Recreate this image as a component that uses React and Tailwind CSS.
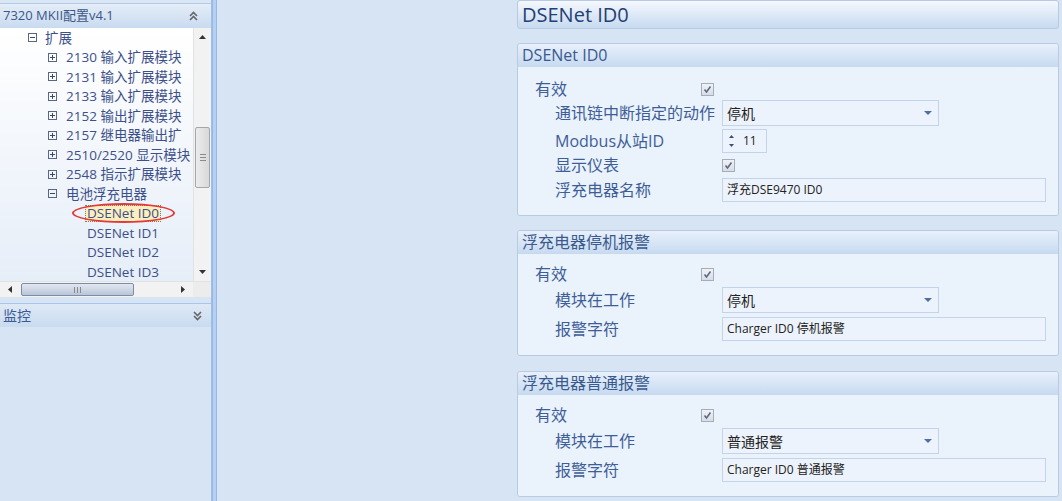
import React from "react";

const TREE = [
  { l: 0, icon: "minus", t: "扩展" },
  { l: 1, icon: "plus", t: "2130 输入扩展模块" },
  { l: 1, icon: "plus", t: "2131 输入扩展模块" },
  { l: 1, icon: "plus", t: "2133 输入扩展模块" },
  { l: 1, icon: "plus", t: "2152 输出扩展模块" },
  { l: 1, icon: "plus", t: "2157 继电器输出扩" },
  { l: 1, icon: "plus", t: "2510/2520 显示模块" },
  { l: 1, icon: "plus", t: "2548 指示扩展模块" },
  { l: 1, icon: "minus", t: "电池浮充电器" },
  { l: 2, t: "DSENet ID0", sel: true },
  { l: 2, t: "DSENet ID1" },
  { l: 2, t: "DSENet ID2" },
  { l: 2, t: "DSENet ID3" },
];

function ExpandIcon({ plus }) {
  return (
    <svg width="9" height="9" viewBox="0 0 9 9" className="shrink-0">
      <rect x="0.5" y="0.5" width="8" height="8" fill="none" stroke="#5a6684" />
      <path d="M2 4.5h5" stroke="#3c4868" />
      {plus && <path d="M4.5 2v5" stroke="#3c4868" />}
    </svg>
  );
}

function DoubleChevron({ down }) {
  return (
    <svg width="9" height="10" viewBox="0 0 9 10" className={down ? "rotate-180" : ""}>
      <path d="M1 5l3.5-3.5L8 5M1 9l3.5-3.5L8 9" fill="none" stroke="#666" strokeWidth="1.6" />
    </svg>
  );
}

function Tri({ dir, color = "#333", w = 7, h = 4 }) {
  const d =
    dir === "up"
      ? `M0 ${h}L${w / 2} 0L${w} ${h}Z`
      : dir === "down"
      ? `M0 0L${w} 0L${w / 2} ${h}Z`
      : dir === "left"
      ? `M${h} 0L0 ${w / 2}L${h} ${w}Z`
      : `M0 0L${h} ${w / 2}L0 ${w}Z`;
  const vw = dir === "up" || dir === "down" ? w : h;
  const vh = dir === "up" || dir === "down" ? h : w;
  return (
    <svg width={vw} height={vh} viewBox={`0 0 ${vw} ${vh}`}>
      <path d={d} fill={color} />
    </svg>
  );
}

function LeftPanel() {
  return (
    <div className="w-[212px] h-full flex flex-col bg-[#d6e4f3] border-r border-[#a3bedf]">
      <div className="h-[4px] bg-[#dae6f4] border-b border-[#b5cae6]" />
      <div className="h-[24px] flex items-center justify-between pl-[3px] pr-[13px] bg-gradient-to-b from-[#e4edf8] to-[#c9dbf0] text-[13px] text-[#3b5688]">
        <span>7320 MKII配置v4.1</span>
        <DoubleChevron />
      </div>
      <div className="h-[253px] flex relative bg-gradient-to-b from-white to-[#e6eef8]">
        <div className="flex-1 overflow-hidden text-[13.5px] text-[#3d508a] whitespace-nowrap">
          {TREE.map((it, i) => (
            <div
              key={i}
              className={
                "h-[19.5px] flex items-center " +
                (it.l === 0 ? "pl-[28px]" : it.l === 1 ? "pl-[48px]" : "pl-[85px]")
              }
            >
              {it.icon && <ExpandIcon plus={it.icon === "plus"} />}
              {it.icon ? (
                <span className={it.l === 0 ? "ml-[8px]" : "ml-[9px]"}>{it.t}</span>
              ) : it.sel ? (
                <span className="h-[17px] flex items-center px-[1px] border border-dotted border-[#7a7a7a] bg-[#fcefbd]">
                  {it.t}
                </span>
              ) : (
                <span className="pl-[2px]">{it.t}</span>
              )}
            </div>
          ))}
        </div>
        <div className="w-[18px] flex flex-col bg-[#f2f2f2] border-l border-[#e2e2e2]">
          <div className="h-[18px] flex items-center justify-center">
            <Tri dir="up" />
          </div>
          <div className="flex-1 relative">
            <div className="absolute left-[1px] right-[1px] top-[81px] h-[61px] rounded-[2px] border border-[#a6a6a6] bg-gradient-to-r from-[#ececec] to-[#d8d8d8] flex items-center justify-center">
              <div className="flex flex-col gap-[2px]">
                <div className="w-[6px] h-px bg-[#8a8a8a]" />
                <div className="w-[6px] h-px bg-[#8a8a8a]" />
                <div className="w-[6px] h-px bg-[#8a8a8a]" />
              </div>
            </div>
          </div>
          <div className="h-[18px] flex items-center justify-center">
            <Tri dir="down" />
          </div>
        </div>
        <div className="absolute left-[72px] top-[175px] w-[103px] h-[20px] rounded-[50%] border-2 border-[#e23a3a]" />
      </div>
      <div className="h-[16px] flex bg-[#f2f2f2] border-t border-[#e2e2e2]">
        <div className="w-[20px] flex items-center justify-center">
          <Tri dir="left" />
        </div>
        <div className="w-[113px] my-[1px] ml-[1px] rounded-[2px] border border-[#7d8ca8] bg-gradient-to-b from-[#e2e8f1] to-[#b9c5d6] flex items-center justify-center">
          <div className="flex gap-[2px]">
            <div className="w-px h-[6px] bg-[#8a8a8a]" />
            <div className="w-px h-[6px] bg-[#8a8a8a]" />
            <div className="w-px h-[6px] bg-[#8a8a8a]" />
          </div>
        </div>
        <div className="flex-1 flex items-center justify-end pr-[8px]">
          <Tri dir="right" />
        </div>
        <div className="w-[18px] bg-[#ececec]" />
      </div>
      <div className="h-[6px]" />
      <div className="h-[24px] border-t border-[#a9c5ec] flex items-center justify-between pl-[3px] pr-[9px] bg-gradient-to-b from-[#dfe9f6] to-[#c9dbf0] text-[14px] text-[#3b5a96]">
        <span>监控</span>
        <DoubleChevron down />
      </div>
      <div className="flex-1 bg-[#d6e4f3]" />
    </div>
  );
}

function Check() {
  return (
    <div className="w-[13px] h-[13px] border border-[#a3adbd] bg-gradient-to-b from-[#f2f2f2] to-[#d9dde3] flex items-center justify-center">
      <svg width="9" height="9" viewBox="0 0 9 9">
        <path d="M1.5 4.5l2 2.5L7.5 1.5" fill="none" stroke="#56678a" strokeWidth="1.5" />
      </svg>
    </div>
  );
}

function Dropdown({ v }) {
  return (
    <div className="w-[217px] h-[26px] border border-[#c3d4ea] bg-[#edf3fc] flex items-center justify-between pl-[4px] pr-[6px] text-[14px] text-[#222]">
      <span>{v}</span>
      <Tri dir="down" color="#4e6ea6" w={8} h={4} />
    </div>
  );
}

function TextField({ v }) {
  return (
    <div className="w-[324px] h-[24px] border border-[#c3d4ea] bg-[#edf3fc] flex items-center px-[4px] text-[12px] text-[#222]">
      {v}
    </div>
  );
}

function Spinner({ v }) {
  return (
    <div className="w-[45px] h-[24px] border border-[#c3d4ea] bg-[#edf3fc] flex items-center pl-[6px] text-[12px] text-[#222]">
      <div className="flex flex-col gap-[6px]">
        <Tri dir="up" color="#3d4f78" w={5} h={3} />
        <Tri dir="down" color="#3d4f78" w={5} h={3} />
      </div>
      <span className="ml-[9px]">{v}</span>
    </div>
  );
}

function Row({ h, sub, label, children, checkCol }) {
  return (
    <div className={"flex items-center " + h}>
      <div
        className={
          "shrink-0 text-[16px] text-[#3e5e98] " +
          (sub ? "pl-[37px] " : "pl-[17px] ") +
          (checkCol ? "w-[183px]" : "w-[204px]")
        }
      >
        {label}
      </div>
      {children}
    </div>
  );
}

function Group({ title, className, children }) {
  return (
    <div className={"border border-[#b8cbe3] rounded-[3px] overflow-hidden " + className}>
      <div className="h-[23px] flex items-center pl-[4px] bg-gradient-to-b from-[#e8f0fb] to-[#c8dbf1] border-b border-[#c9d9ed] text-[16px] text-[#3a5a8e]">
        {title}
      </div>
      <div className="bg-[#eaf2fc]">{children}</div>
    </div>
  );
}

export default function App() {
  return (
    <div className="w-[1062px] h-[501px] overflow-hidden flex bg-[#d6e4f3] font-['Open_Sans','Noto_Sans_CJK_SC',sans-serif]">
      <LeftPanel />
      <div className="w-[5px] h-full border-x border-[#98b8e4] bg-[#b6d0f3]" />
      <div className="flex-1 pl-[300px] pr-[3px]">
        <div className="h-[29px] rounded-[3px] border border-[#b6cae3] bg-gradient-to-b from-[#f5f8fd] to-[#c7daf0] flex items-center pl-[4px] text-[20px] text-[#233f74]">
          DSENet ID0
        </div>
        <Group title="DSENet ID0" className="mt-[14px]">
          <div className="pt-[12px] pb-[10px]">
            <Row h="h-[20px]" label="有效" checkCol>
              <Check />
            </Row>
            <Row h="h-[28px]" sub label="通讯链中断指定的动作">
              <Dropdown v="停机" />
            </Row>
            <Row h="h-[28px]" sub label="Modbus从站ID">
              <Spinner v="11" />
            </Row>
            <Row h="h-[20px]" sub label="显示仪表">
              <Check />
            </Row>
            <Row h="h-[30px]" sub label="浮充电器名称">
              <TextField v="浮充DSE9470 ID0" />
            </Row>
          </div>
        </Group>
        <Group title="浮充电器停机报警" className="mt-[14px]">
          <div className="pt-[9px] pb-[12px]">
            <Row h="h-[22px]" label="有效" checkCol>
              <Check />
            </Row>
            <Row h="h-[30px]" sub label="模块在工作">
              <Dropdown v="停机" />
            </Row>
            <Row h="h-[28px]" sub label="报警字符">
              <TextField v="Charger ID0 停机报警" />
            </Row>
          </div>
        </Group>
        <Group title="浮充电器普通报警" className="mt-[15px]">
          <div className="pt-[9px] pb-[12px]">
            <Row h="h-[22px]" label="有效" checkCol>
              <Check />
            </Row>
            <Row h="h-[30px]" sub label="模块在工作">
              <Dropdown v="普通报警" />
            </Row>
            <Row h="h-[28px]" sub label="报警字符">
              <TextField v="Charger ID0 普通报警" />
            </Row>
          </div>
        </Group>
      </div>
    </div>
  );
}
